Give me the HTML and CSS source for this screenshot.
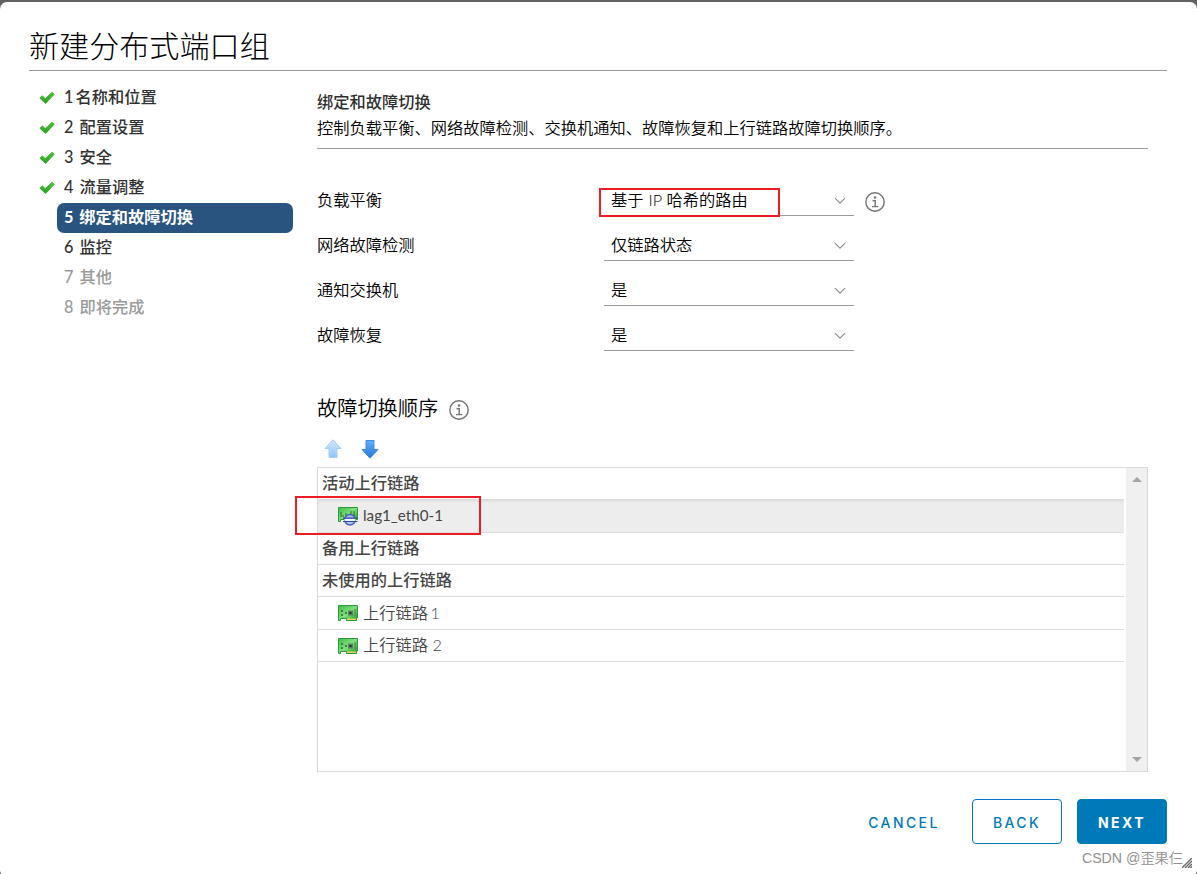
FILE: index.html
```html
<!DOCTYPE html>
<html lang="zh-CN">
<head>
  <meta charset="UTF-8">
  <meta name="viewport" content="width=device-width, initial-scale=1.0">
  <title>新建分布式端口组</title>
  <link rel="stylesheet" href="styles.css">
</head>
<body>
  <!-- Shared icons -->
  <svg class="sprite" width="0" height="0">
    <defs>
      <linearGradient id="green" x1="0" y1="0" x2="1" y2="1">
        <stop offset="0" stop-color="#3fbb45"/>
        <stop offset="0.5" stop-color="#7fe07c"/>
        <stop offset="1" stop-color="#22952c"/>
      </linearGradient>
      <linearGradient id="blue" x1="0" y1="0" x2="0" y2="1">
        <stop offset="0" stop-color="#66aef5"/>
        <stop offset="1" stop-color="#1f78e0"/>
      </linearGradient>
      <linearGradient id="pale" x1="0" y1="0" x2="0" y2="1">
        <stop offset="0" stop-color="#d2e9ff"/>
        <stop offset="1" stop-color="#91c3f7"/>
      </linearGradient>
      <linearGradient id="tick" x1="0" y1="0" x2="0" y2="1">
        <stop offset="0" stop-color="#4cc23a"/>
        <stop offset="1" stop-color="#2c9f24"/>
      </linearGradient>
    </defs>
    <symbol id="check" viewBox="0 0 16 14">
      <path d="M0.8 7.2L3.3 4.8L6.2 7.6L13 1.2L15.3 3.2L6.6 12.6Z" fill="url(#tick)" stroke="url(#tick)" stroke-width="0.8" stroke-linejoin="round"/>
    </symbol>
    <symbol id="chevron" viewBox="0 0 12 8">
      <path d="M1 1.2L6 6.2L11 1.2" fill="none" stroke="#8c8c8c" stroke-width="1.1"/>
    </symbol>
    <symbol id="info" viewBox="0 0 20 20">
      <circle cx="10" cy="10" r="9.2" fill="none" stroke="#737373" stroke-width="1.4"/>
      <circle cx="10" cy="5.6" r="1.25" fill="#737373"/>
      <path d="M7.6 8.8H10.2V14.4M7 14.6H13.2" fill="none" stroke="#737373" stroke-width="1.4"/>
    </symbol>
    <symbol id="nic" viewBox="0 0 20 16">
      <path d="M0.5 0.5H19.5V13H18.5V15.5H8.5V13.5H2.5V15.5H0.5Z" fill="url(#green)" stroke="#2c9a3a"/>
      <path d="M9 13.5H18V15H9Z" fill="#e8d25a"/>
      <path d="M3 5H5V7H3ZM3 9H5V11H3ZM7 7H9V9H7Z" fill="#3f7f46"/>
      <path d="M10 5.5H15V10.5H10Z" fill="#5c7f60"/>
      <path d="M11.5 7H13.5V9H11.5Z" fill="#1c2e20"/>
      <path d="M16.5 4H18V11H16.5Z" fill="#4f9457"/>
    </symbol>
    <symbol id="lag" viewBox="0 0 20 20">
      <path d="M0.5 1.5H19.5V13.5H2.5V15.5H0.5Z" fill="url(#green)" stroke="#2c9a3a"/>
      <path d="M3 6V11M5 9V11M8 7V10M13 5V8M16 5V10" stroke="#256b2d" fill="none"/>
      <circle cx="12" cy="13.7" r="5.3" fill="#a9c1ea" stroke="#4660b4" stroke-width="1.5"/>
      <path d="M6.5 13.8H17.5" stroke="#fff" stroke-width="2"/>
      <path d="M5 12.2H19.5M5 15.5H19.5" stroke="#2d48a2" stroke-width="1.2"/>
    </symbol>
  </svg>

  <div class="modal">
    <h1 class="modal-title">新建分布式端口组</h1>

    <div class="modal-body">
      <ul class="steps">
        <li class="step"><svg class="check"><use href="#check"/></svg><span class="step-label">1 名称和位置</span></li>
        <li class="step"><svg class="check"><use href="#check"/></svg><span class="step-label">2 配置设置</span></li>
        <li class="step"><svg class="check"><use href="#check"/></svg><span class="step-label">3 安全</span></li>
        <li class="step"><svg class="check"><use href="#check"/></svg><span class="step-label">4 流量调整</span></li>
        <li class="step active"><span class="step-label">5 绑定和故障切换</span></li>
        <li class="step"><span class="step-label">6 监控</span></li>
        <li class="step disabled"><span class="step-label">7 其他</span></li>
        <li class="step disabled"><span class="step-label">8 即将完成</span></li>
      </ul>

      <div class="content">
        <div class="content-header">
          <h2 class="content-title">绑定和故障切换</h2>
          <p class="content-text">控制负载平衡、网络故障检测、交换机通知、故障恢复和上行链路故障切换顺序。</p>
        </div>

        <div class="form">
          <div class="form-row">
            <span class="form-label">负载平衡</span>
            <div class="select"><span>基于 IP 哈希的路由</span><svg class="chevron"><use href="#chevron"/></svg><span class="mark mark-select"></span></div>
            <svg class="info"><use href="#info"/></svg>
          </div>
          <div class="form-row">
            <span class="form-label">网络故障检测</span>
            <div class="select"><span>仅链路状态</span><svg class="chevron"><use href="#chevron"/></svg></div>
          </div>
          <div class="form-row">
            <span class="form-label">通知交换机</span>
            <div class="select"><span>是</span><svg class="chevron"><use href="#chevron"/></svg></div>
          </div>
          <div class="form-row">
            <span class="form-label">故障恢复</span>
            <div class="select"><span>是</span><svg class="chevron"><use href="#chevron"/></svg></div>
          </div>
        </div>

        <h3 class="order-title">故障切换顺序<svg class="info"><use href="#info"/></svg></h3>

        <div class="toolbar">
          <svg width="18" height="20" viewBox="0 0 18 20"><path d="M9 0.8L17 9.5H13V18.5H5V9.5H1Z" fill="url(#pale)" stroke="#a3cdf6" stroke-linejoin="round"/></svg>
          <svg width="18" height="20" viewBox="0 0 18 20"><path d="M9 19.2L17 10.5H13V1.5H5V10.5H1Z" fill="url(#blue)" stroke="#3b8be6" stroke-linejoin="round"/></svg>
        </div>

        <div class="list">
          <div class="rows">
            <div class="row group">活动上行链路</div>
            <div class="row item selected"><svg class="lag"><use href="#lag"/></svg><span class="lag-name">lag1_eth0-1</span><span class="mark mark-row"></span></div>
            <div class="row group">备用上行链路</div>
            <div class="row group">未使用的上行链路</div>
            <div class="row item tall"><svg class="nic"><use href="#nic"/></svg><span>上行链路 1</span></div>
            <div class="row item"><svg class="nic"><use href="#nic"/></svg><span>上行链路 2</span></div>
          </div>
          <div class="scrollbar">
            <span class="arrow-up"></span>
            <span class="arrow-down"></span>
          </div>
        </div>
      </div>
    </div>

    <div class="modal-footer">
      <button type="button" class="btn btn-link">CANCEL</button>
      <button type="button" class="btn btn-outline">BACK</button>
      <button type="button" class="btn btn-primary">NEXT</button>
    </div>

    <div class="watermark">CSDN @歪果仨</div>
    <svg class="grip" width="10" height="10" viewBox="0 0 10 10"><path d="M0 10L10 0M3 10L10 3M6 10L10 6M8.5 10L10 8.5" stroke="#666" stroke-width="1.4"/></svg>
  </div>
</body>
</html>
```
FILE: styles.css
```css
* {
  box-sizing: border-box;
  margin: 0;
  padding: 0;
}

body {
  height: 874px;
  padding-top: 2px;
  overflow: hidden;
  background-color: #656263;
  color: #000;
  font-family: Lato, "Noto Sans CJK SC", sans-serif;
  font-size: 16.25px;
  font-weight: 350;
}

svg {
  display: block;
  flex: none;
}

.sprite {
  position: absolute;
}

.modal {
  position: relative;
  height: 875px;
  padding: 24px 30px 0 29px;
  background: #fff;
  border-radius: 7px;
}

.modal-title {
  height: 45px;
  border-bottom: 1px solid #9a9a9a;
  font-size: 30.1px;
  font-weight: 200;
  line-height: 39px;
}

.modal-body {
  display: flex;
  height: 701px;
}

/* Wizard steps */
.steps {
  width: 264px;
  margin-right: 24px;
  padding: 12px 0 0 10px;
  list-style: none;
}

.step {
  display: flex;
  align-items: center;
  justify-content: flex-end;
  height: 30px;
  color: #313131;
  font-weight: 500;
}

.step-label {
  width: 236px;
  height: 30px;
  padding-left: 7px;
  border-radius: 7px;
  line-height: 27px;
  word-spacing: 2px;
}

.step:first-child .step-label {
  word-spacing: -2px;
}

.check {
  width: 16px;
  height: 14px;
  margin-right: 2px;
}

.active .step-label {
  background-color: #29547f;
  color: #fff;
  font-weight: 700;
}

.disabled {
  color: #9a9a9a;
}

/* Content */
.content {
  width: 831px;
}

.content-header {
  height: 78px;
  padding-top: 18px;
  border-bottom: 1px solid #9a9a9a;
}

.content-title {
  color: #313131;
  font-size: 16.25px;
  font-weight: 500;
  line-height: 26px;
}

.content-text {
  line-height: 25px;
}

.form {
  padding-top: 37px;
}

.form-row {
  display: flex;
  align-items: flex-start;
  height: 45px;
}

.form-label {
  width: 287px;
  line-height: 27px;
}

.select {
  position: relative;
  display: flex;
  align-items: center;
  justify-content: space-between;
  width: 250px;
  height: 30px;
  padding: 0 8px 1px 7px;
  border-bottom: 1px solid #9a9a9a;
  line-height: 28px;
  word-spacing: 0.5px;
}

.chevron {
  width: 12px;
  height: 8px;
  margin-top: 2px;
}

.info {
  width: 20px;
  height: 20px;
  margin: 6px 0 0 11px;
}

.order-title {
  display: flex;
  height: 69px;
  padding-top: 28px;
  font-size: 20.2px;
  font-weight: 350;
  line-height: 28px;
}

.order-title .info {
  margin-top: 6px;
}

.toolbar {
  display: flex;
  gap: 19px;
  height: 32px;
  padding: 4px 0 0 7px;
}

.list {
  display: flex;
  justify-content: space-between;
  height: 305px;
  border: 1px solid #d9d9d9;
  color: #454545;
}

.rows {
  width: 806px;
}

.row {
  position: relative;
  display: flex;
  align-items: center;
  height: 32px;
  padding-bottom: 3px;
  border-bottom: 1px solid #dcdcdc;
}

.group {
  padding-left: 4px;
  font-weight: 500;
}

.item {
  height: 32px;
  padding-left: 20px;
  padding-bottom: 0;
  gap: 5px;
}

.item span {
  margin-top: -3px;
}

.tall,
.selected {
  height: 33px;
}

.tall span {
  word-spacing: -2px;
}

.selected {
  background: linear-gradient(#dedede, #ededed 3px);
}

.nic {
  width: 20px;
  height: 16px;
}

.lag {
  width: 20px;
  height: 20px;
}

.lag-name {
  font-size: 15.2px;
  font-weight: 400;
}

.scrollbar {
  display: flex;
  flex-direction: column;
  align-items: center;
  justify-content: space-between;
  width: 21px;
  padding: 9px 0;
  background-color: #f0f0f0;
}

.arrow-up,
.arrow-down {
  border: 5px solid transparent;
  border-top-width: 0;
  border-bottom: 5px solid #a3a3a3;
}

.arrow-down {
  border-top: 5px solid #a3a3a3;
  border-bottom: 0;
}

/* Red highlight frames */
.mark {
  position: absolute;
  border: 2px solid #ec1c24;
}

.mark-select {
  top: 2px;
  left: -5px;
  width: 181px;
  height: 29px;
}

.item .mark-row {
  top: -4px;
  left: -23px;
  z-index: 1;
  width: 186px;
  height: 39px;
  margin: 0;
}

/* Footer */
.modal-footer {
  display: flex;
  justify-content: flex-end;
  padding-top: 27px;
}

.btn {
  width: 90px;
  height: 45px;
  margin-left: 15px;
  border: 1px solid #0079b8;
  border-radius: 4px;
  background: #fff;
  color: #0079b8;
  font-family: Inter, sans-serif;
  font-size: 14px;
  font-weight: 500;
  letter-spacing: 2.4px;
  line-height: 45px;
}

.btn-link {
  width: 106px;
  border-color: transparent;
}

.btn-primary {
  background-color: #0079b8;
  color: #fff;
  font-weight: 700;
}

.watermark {
  position: absolute;
  right: 14px;
  bottom: 8px;
  color: #909090;
  font-family: "Liberation Sans", "Noto Sans CJK SC", sans-serif;
  font-size: 14.2px;
  line-height: 22px;
}

.grip {
  position: absolute;
  right: 5px;
  bottom: 9px;
}
```
